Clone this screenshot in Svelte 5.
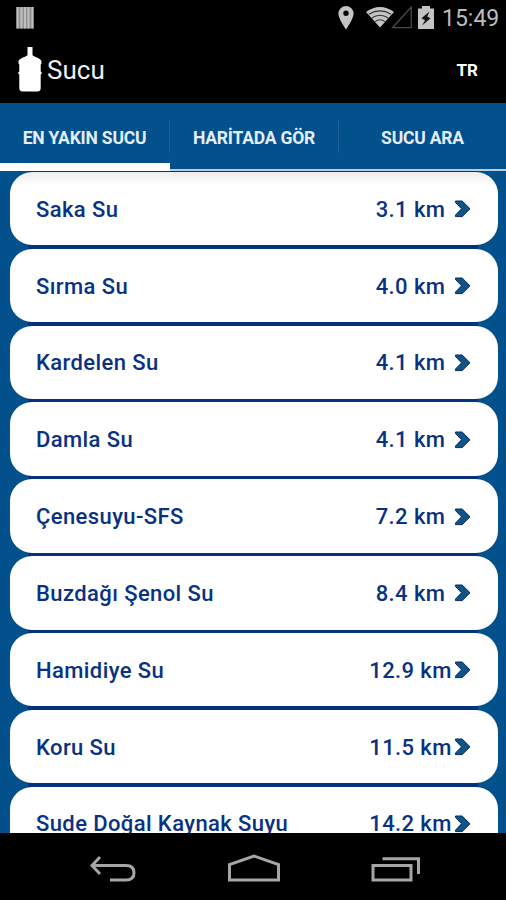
<script>
    let active = 0;

    const tabs = ["EN YAKIN SUCU", "HARİTADA GÖR", "SUCU ARA"];

    const items = [
        { name: "Saka Su", distance: "3.1 km" },
        { name: "Sırma Su", distance: "4.0 km" },
        { name: "Kardelen Su", distance: "4.1 km" },
        { name: "Damla Su", distance: "4.1 km" },
        { name: "Çenesuyu-SFS", distance: "7.2 km" },
        { name: "Buzdağı Şenol Su", distance: "8.4 km" },
        { name: "Hamidiye Su", distance: "12.9 km" },
        { name: "Koru Su", distance: "11.5 km" },
        { name: "Sude Doğal Kaynak Suyu", distance: "14.2 km" },
    ];
</script>

<div class="screen">
    <div class="status">
        <svg class="bars" width="18" height="22" viewBox="0 0 18 22">
            <path fill="#909090" d="M.5 0h17v21.500H.5z" />
            <path d="M1.500 0v21.500M5.500 0v21.500M9 0v21.500M12.500 0v21.500M16.500 0v21.500" stroke="#c0c0c0" stroke-width="2" />
        </svg>
        <div class="status-icons">
            <svg width="16" height="24" viewBox="0 0 16 24">
                <path fill="#c4c4c4" fill-rule="evenodd" d="M8 0a7.600 7.600 0 0 0-7.600 7.600C.4 13 8 23.500 8 23.500S15.600 13 15.600 7.600A7.600 7.600 0 0 0 8 0zm0 4.600a2.700 2.700 0 1 1 0 5.400 2.700 2.700 0 0 1 0-5.400z" />
            </svg>
            <svg class="wifi" width="47" height="24" viewBox="0 0 47 24">
                <path d="M26.500 21.700H45.200V1z" fill="none" stroke="#484848" stroke-width="1.300" />
                <path d="M0 6Q14 -4 28 6L14 21.500z" fill="#c4c4c4" />
                <path d="M2.800 8.200Q14 1.500 25.200 8.200M5.800 12Q14 6.500 22.200 12M9 15.600Q14 12 19 15.600" fill="none" stroke="#333" stroke-width="1.100" />
            </svg>
            <svg class="battery" width="16" height="23" viewBox="0 0 16 23">
                <path d="M4 0h8v2.500h4V23H0V2.500h4z" fill="#c4c4c4" />
                <path d="M11.500 5.500L3.500 12.200l3.500 2-2.800 5.300 8.300-7.200-3.300-1.800z" fill="#111" />
            </svg>
            <span class="clock">15:49</span>
        </div>
    </div>

    <header>
        <svg class="bottle" width="24" height="45" viewBox="0 0 24 45">
            <path fill="#fff" d="M9.500 0h5v8c1 2 8 2.800 9 6.200v2.300l-.8.900v7.100l1 .8v1.500l-1 .8V41q0 3.500-3.500 3.500H4.800q-3.500 0-3.500-3.500V27.600l-1-.8v-1.500l1-.8v-7.100l-.8-.9v-2.300C1.500 10.800 8.500 10 9.500 8z" />
        </svg>
        <h1>Sucu</h1>
        <span class="lang">TR</span>
    </header>

    <nav>
        {#each tabs as tab, i}
            <button class:active={i === active} on:click={() => (active = i)}>
                <span>{tab}</span>
            </button>
        {/each}
    </nav>

    <main>
        {#each items as item}
            <div class="item">
                <span class="name">{item.name}</span>
                <span class="distance">{item.distance}</span>
                <svg width="18" height="18" viewBox="0 0 18 18">
                    <path d="M1.500 1h6.700l7.800 7.800-7.800 7.800H1.500v-1.500l6-6.300-6-6.300z" fill="#0e5489" stroke="#0a2858" stroke-width="1" />
                </svg>
            </div>
        {/each}
    </main>

    <footer>
        <svg width="50" height="30" viewBox="0 0 50 30">
            <path d="M13 3L5 11.500l8 8.500M5 11.500h34q8 0 8 7.200t-8 7.300H23" />
        </svg>
        <svg width="54" height="30" viewBox="0 0 54 30">
            <path d="M2.500 26V10.500L27 2l24.500 8.500V26z" />
        </svg>
        <svg width="50" height="30" viewBox="0 0 50 30">
            <path d="M2 11.500h38V26H2zM11.500 4.800h36V20" />
        </svg>
    </footer>
</div>

<style>
    :global(body) {
        margin: 0;
        background: #000;
    }

    .screen {
        display: flex;
        flex-direction: column;
        width: 506px;
        height: 900px;
        overflow: hidden;
        background: #000;
        font-family: Roboto, "Liberation Sans", sans-serif;
    }

    svg {
        display: block;
        flex: none;
    }

    .status {
        display: flex;
        justify-content: space-between;
        box-sizing: border-box;
        height: 37px;
        padding: 6px 7px 0 16px;
    }

    .bars {
        margin-top: 1px;
    }

    .status-icons {
        display: flex;
        align-items: flex-start;
    }

    .wifi {
        margin-left: 12px;
    }

    .battery {
        margin-left: 5px;
    }

    .clock {
        width: 57px;
        margin-left: 8px;
        color: #bcbcbc;
        font-size: 23px;
        line-height: 26px;
        white-space: nowrap;
    }

    header {
        display: flex;
        align-items: center;
        box-sizing: border-box;
        height: 66px;
        padding: 0 28px 1px 18px;
        color: #fff;
    }

    h1 {
        flex: 1;
        margin: 1px 0 0 5px;
        color: #f0f0f0;
        font-size: 26px;
        font-weight: 400;
    }

    .lang {
        font-size: 17px;
        font-weight: 700;
    }

    nav {
        display: grid;
        grid-template-columns: 170px 169px 167px;
        flex: none;
        height: 68px;
        background: #02508c;
    }

    button {
        display: flex;
        align-items: flex-start;
        padding: 17px 0 0;
        border: 0;
        border-bottom: 2px solid #b9cce2;
        background: none;
        font: 700 17.500px Roboto, "Liberation Sans", sans-serif;
        letter-spacing: -0.200px;
        color: #e4edfa;
    }

    button span {
        flex: 1;
        height: 33px;
        line-height: 36px;
        white-space: nowrap;
        border-right: 1px solid #1b609a;
    }

    button:last-child span {
        border-right: 0;
    }

    button.active {
        border-bottom: 8px solid #fff;
    }

    main {
        display: flex;
        flex-direction: column;
        gap: 3.400px;
        flex: 1;
        min-height: 0;
        padding: 1px 8.500px 0 9.500px;
        overflow: hidden;
        background: linear-gradient(90deg, #02508c 0 28px, #06317c 28px 478px, #02508c 478px);
    }

    .item {
        display: flex;
        align-items: center;
        flex: none;
        box-sizing: border-box;
        height: 73.450px;
        padding: 1px 25.500px 0 26.500px;
        border-radius: 22px;
        background: #fff;
        color: #0a3282;
        font-size: 22px;
        font-weight: 500;
        letter-spacing: 0.400px;
    }

    .item:first-child {
        background: linear-gradient(#ededed, #fff 14px);
    }

    .name {
        flex: 1;
    }

    .distance {
        width: 83px;
        margin-right: 2px;
        text-align: center;
        white-space: nowrap;
    }

    footer {
        display: flex;
        justify-content: space-between;
        flex: none;
        box-sizing: border-box;
        height: 67px;
        padding: 21px 85px 0 87px;
    }

    footer path {
        fill: none;
        stroke: #a6a6a6;
        stroke-width: 3;
    }
</style>
